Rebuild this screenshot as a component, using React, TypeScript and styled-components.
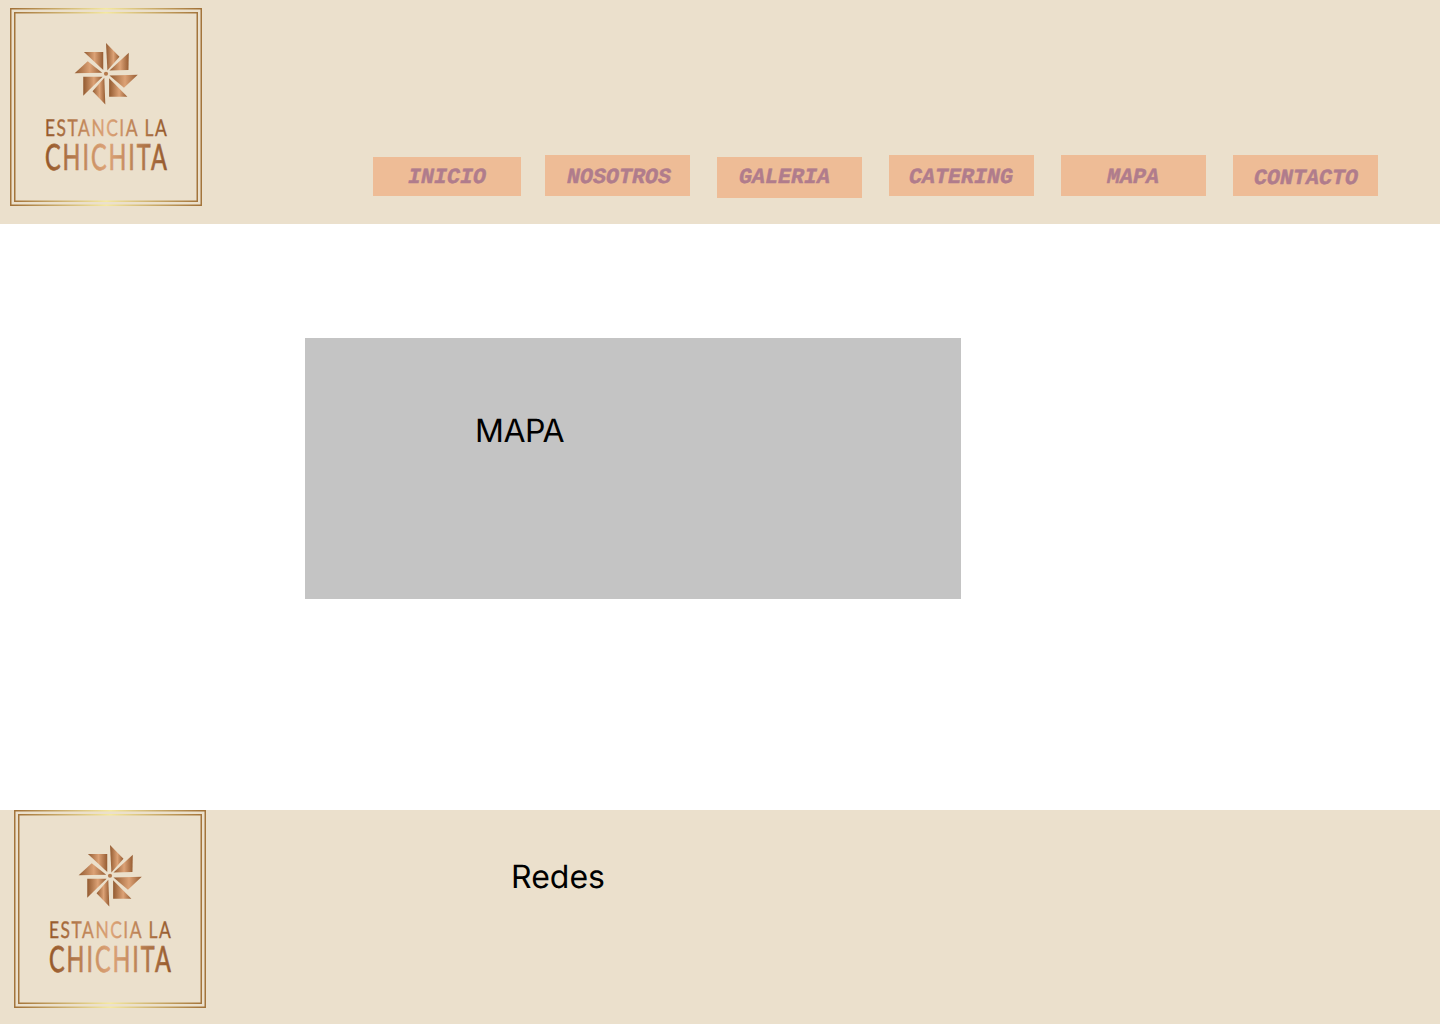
import { useId } from 'react'
import { styled, createGlobalStyle } from 'styled-components'

const BEIGE = '#ebe0cc'

const GlobalStyle = createGlobalStyle`
  html, body {
    margin: 0;
    padding: 0;
    background: #fff;
    font-family: Inter, 'Liberation Sans', sans-serif;
    text-rendering: geometricPrecision;
  }
`

const Page = styled.div`
  width: 1440px;
  height: 1024px;
  display: flex;
  flex-direction: column;
  overflow: hidden;
`

const Header = styled.header`
  height: 224px;
  flex: none;
  display: flex;
  background: ${BEIGE};
  padding: 8px 0 0 10px;
  box-sizing: border-box;
`

const LogoSvg = styled.svg`
  width: 192px;
  height: 198px;
  flex: none;
  display: block;
`

const Nav = styled.nav`
  display: flex;
  align-items: flex-start;
  margin-left: 171px;
  padding-top: 147px;
`

const NavItem = styled.a<{ $width: number; $height: number; $top: number; $gap: number; $left: number; $drop: number }>`
  width: ${(props) => props.$width}px;
  height: ${(props) => props.$height}px;
  margin-top: ${(props) => props.$top}px;
  margin-left: ${(props) => props.$gap}px;
  padding-left: ${(props) => props.$left}px;
  padding-top: ${(props) => props.$drop}px;
  box-sizing: border-box;
  background: #eebc96;
  color: #b07c8c;
  font-family: 'Liberation Mono', monospace;
  font-size: 21.7px;
  line-height: 25px;
  font-weight: 700;
  font-style: italic;
  -webkit-text-stroke: 0.5px #b07c8c;
`

const Main = styled.main`
  flex: 1;
  padding: 114px 0 0 305px;
`

const MapBox = styled.div`
  width: 656px;
  height: 261px;
  background: #c4c4c4;
  box-sizing: border-box;
  padding: 73px 0 0 170px;
  font-size: 32px;
  line-height: 39px;
  letter-spacing: -0.5px;
  color: #000;
`

const Footer = styled.footer`
  height: 214px;
  flex: none;
  display: flex;
  background: ${BEIGE};
  box-sizing: border-box;
  padding-left: 14px;
`

const Redes = styled.div`
  margin-left: 305px;
  padding-top: 47px;
  font-size: 32px;
  line-height: 39px;
  color: #000;
`

// wheel blades traced from the logo, in thirds of a pixel
const BLADES = [
  '138,42 177,82 142,122',
  '204,70 203,120 148,122',
  '148,136 230,134 190,172',
  '147,144 200,198 147,198',
  '133,143 136,220 99,182',
  '128,140 72,195 72,140',
  '127,128 47,130 85,95',
  '130,120 74,68 130,68',
]

const NAV_ITEMS = [
  { label: 'INICIO', width: 148, height: 39, top: 2, gap: 0, left: 35, drop: 8 },
  { label: 'NOSOTROS', width: 145, height: 41, top: 0, gap: 24, left: 22, drop: 10 },
  { label: 'GALERIA', width: 145, height: 41, top: 2, gap: 27, left: 22, drop: 8 },
  { label: 'CATERING', width: 145, height: 41, top: 0, gap: 27, left: 20, drop: 10 },
  { label: 'MAPA', width: 145, height: 41, top: 0, gap: 27, left: 46, drop: 10 },
  { label: 'CONTACTO', width: 145, height: 41, top: 0, gap: 27, left: 21, drop: 11 },
]

const Logo = () => {
  const id = useId().replace(/[^a-zA-Z0-9]/g, '')
  return (
    <LogoSvg viewBox="0 0 192 198" aria-label="Estancia La Chichita">
      <defs>
        <linearGradient id={`${id}frame`} gradientUnits="userSpaceOnUse" x1="0" x2="192" y1="0" y2="0">
          <stop offset="0" stopColor="#a06f35" />
          <stop offset="0.5" stopColor="#f5e9a0" />
          <stop offset="1" stopColor="#a06f35" />
        </linearGradient>
        <linearGradient id={`${id}copper`} x1="0" x2="1" y1="0" y2="0">
          <stop offset="0" stopColor="#925a30" />
          <stop offset="0.55" stopColor="#dca276" />
          <stop offset="1" stopColor="#965c32" />
        </linearGradient>
        <linearGradient id={`${id}word`} x1="0" x2="1" y1="0" y2="0">
          <stop offset="0" stopColor="#935729" />
          <stop offset="0.5" stopColor="#dda478" />
          <stop offset="1" stopColor="#935729" />
        </linearGradient>
      </defs>
      <g fill={`url(#${id}frame)`}>
        <rect x="0" y="0" width="192" height="1.5" />
        <rect x="0" y="196.5" width="192" height="1.5" />
        <rect x="4" y="4" width="184" height="1.5" />
        <rect x="4" y="192.5" width="184" height="1.5" />
      </g>
      <g fill="#a3753c">
        <rect x="0" y="0" width="1.5" height="198" />
        <rect x="190.5" y="0" width="1.5" height="198" />
        <rect x="4" y="4" width="1.5" height="190" />
        <rect x="186.5" y="4" width="1.5" height="190" />
      </g>
      <g transform="translate(48.4 20.5) scale(0.345)">
        {BLADES.map((points) => (
          <polygon key={points} points={points} fill={`url(#${id}copper)`} />
        ))}
        <circle cx="138" cy="131" r="6" fill="#b57a4c" />
      </g>
      <text
        transform="translate(35 128) scale(0.757 1)"
        fontFamily="Lato, sans-serif"
        fontSize="23"
        letterSpacing="2"
        stroke={`url(#${id}word)`}
        strokeWidth="0.35"
        fill={`url(#${id}word)`}
      >
        ESTANCIA LA
      </text>
      <text
        transform="translate(35 162) scale(0.65 1)"
        fontFamily="Lato, sans-serif"
        fontSize="36"
        letterSpacing="3"
        stroke={`url(#${id}word)`}
        strokeWidth="0.7"
        fill={`url(#${id}word)`}
      >
        CHICHITA
      </text>
    </LogoSvg>
  )
}

export default function App() {
  return (
    <Page>
      <GlobalStyle />
      <Header>
        <Logo />
        <Nav>
          {NAV_ITEMS.map((item) => (
            <NavItem
              key={item.label}
              $width={item.width}
              $height={item.height}
              $top={item.top}
              $gap={item.gap}
              $left={item.left}
              $drop={item.drop}
            >
              {item.label}
            </NavItem>
          ))}
        </Nav>
      </Header>
      <Main>
        <MapBox>MAPA</MapBox>
      </Main>
      <Footer>
        <Logo />
        <Redes>Redes</Redes>
      </Footer>
    </Page>
  )
}
